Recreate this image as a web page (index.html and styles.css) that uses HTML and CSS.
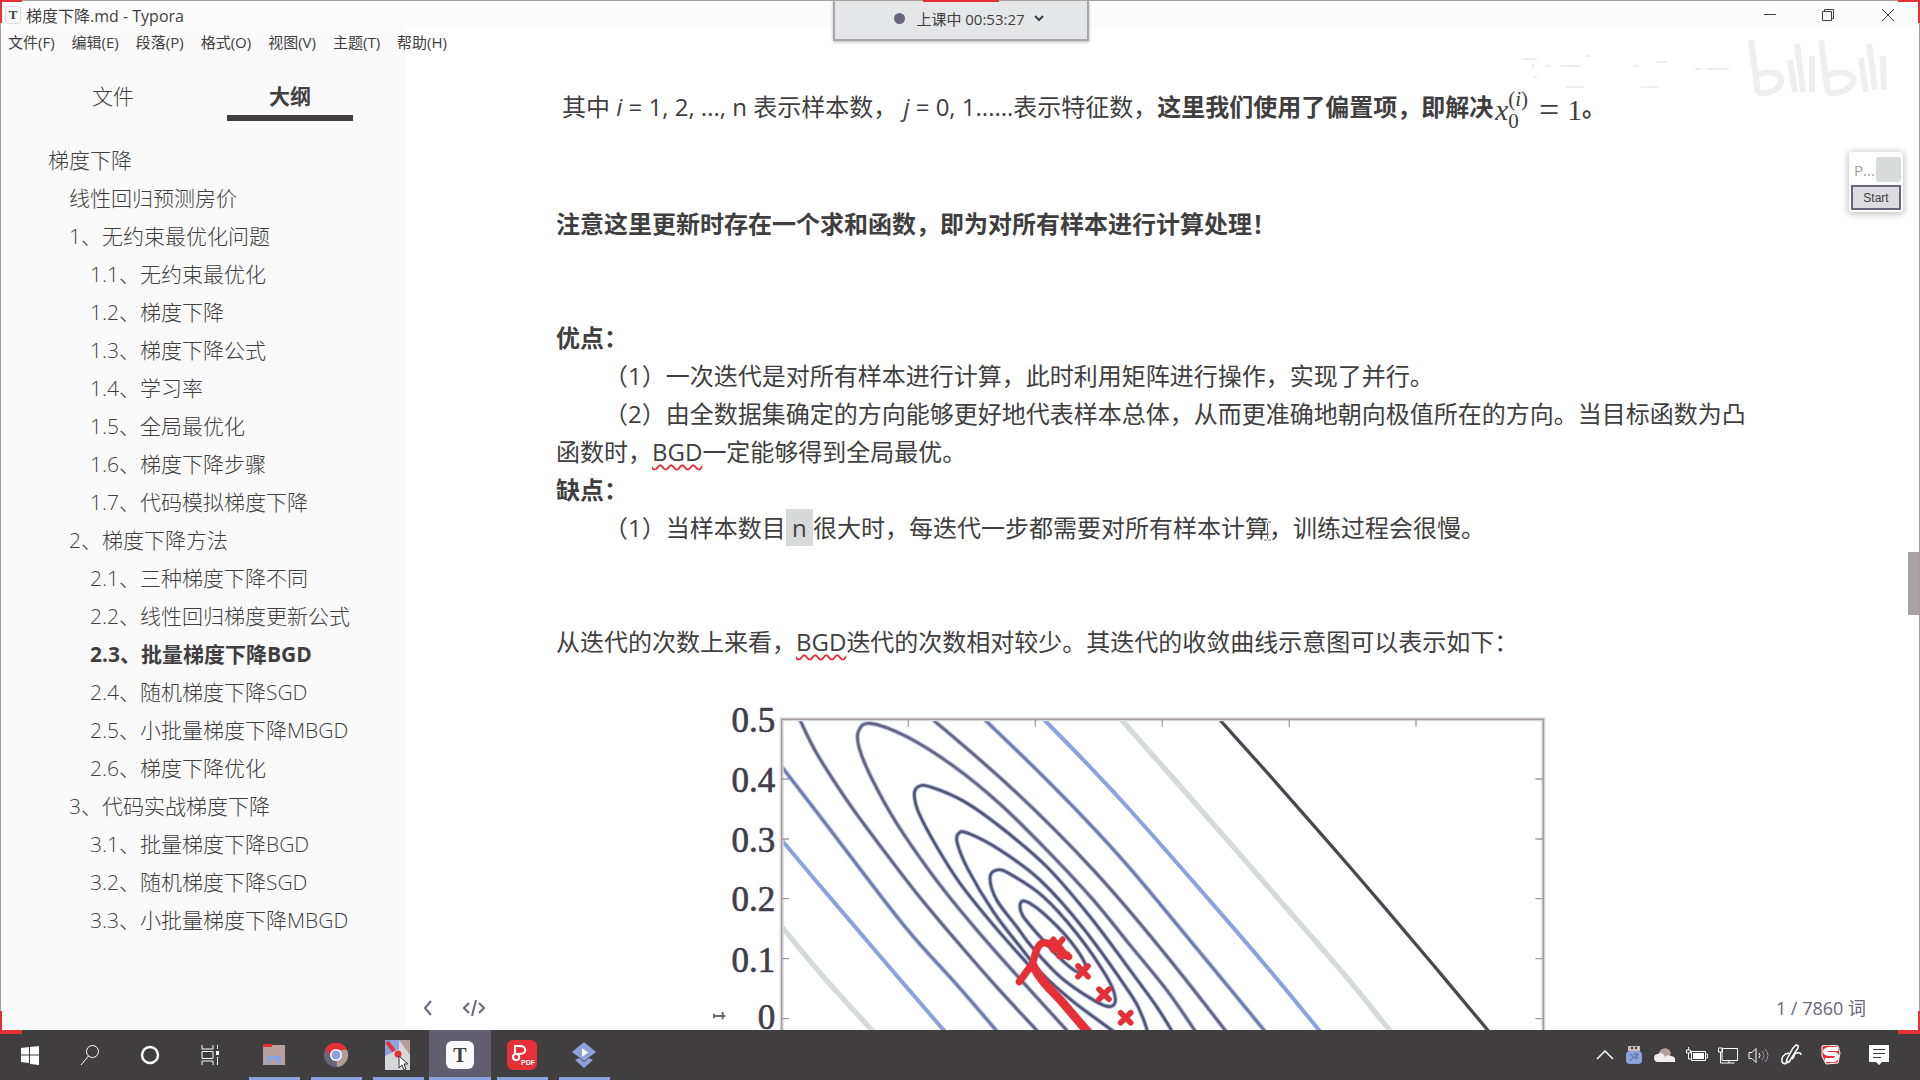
FILE: index.html
```html
<!DOCTYPE html>
<html lang="zh-CN">
<head>
<meta charset="utf-8">
<title>梯度下降.md - Typora</title>
<link rel="stylesheet" href="styles.css">
</head>
<body>
<div class="window">
  <header class="titlebar">
    <span class="app-icon">T</span>
    <span class="title">梯度下降.md - Typora</span>
    <div class="window-buttons">
      <button aria-label="最小化"><svg width="12" height="12" viewBox="0 0 12 12"><path d="M0 5.5h12"/></svg></button>
      <button aria-label="还原"><svg width="12" height="12" viewBox="0 0 12 12"><path d="M.5 2.500h9v9h-9zM2.500 2.500v-2h9v9h-2"/></svg></button>
      <button aria-label="关闭"><svg width="12" height="12" viewBox="0 0 12 12"><path d="M0 0l12 12M12 0L0 12"/></svg></button>
    </div>
  </header>
  <nav class="menubar">
    <button>文件(F)</button><button>编辑(E)</button><button>段落(P)</button><button>格式(O)</button><button>视图(V)</button><button>主题(T)</button><button>帮助(H)</button>
  </nav>
  <div class="workspace">
    <aside class="sidebar">
      <div class="tabs"><button>文件</button><button class="active">大纲</button></div>
      <nav class="outline">
        <a href="#" class="l1">梯度下降</a>
        <a href="#" class="l2">线性回归预测房价</a>
        <a href="#" class="l2">1、无约束最优化问题</a>
        <a href="#" class="l3">1.1、无约束最优化</a>
        <a href="#" class="l3">1.2、梯度下降</a>
        <a href="#" class="l3">1.3、梯度下降公式</a>
        <a href="#" class="l3">1.4、学习率</a>
        <a href="#" class="l3">1.5、全局最优化</a>
        <a href="#" class="l3">1.6、梯度下降步骤</a>
        <a href="#" class="l3">1.7、代码模拟梯度下降</a>
        <a href="#" class="l2">2、梯度下降方法</a>
        <a href="#" class="l3">2.1、三种梯度下降不同</a>
        <a href="#" class="l3">2.2、线性回归梯度更新公式</a>
        <a href="#" class="l3 current">2.3、批量梯度下降BGD</a>
        <a href="#" class="l3">2.4、随机梯度下降SGD</a>
        <a href="#" class="l3">2.5、小批量梯度下降MBGD</a>
        <a href="#" class="l3">2.6、梯度下降优化</a>
        <a href="#" class="l2">3、代码实战梯度下降</a>
        <a href="#" class="l3">3.1、批量梯度下降BGD</a>
        <a href="#" class="l3">3.2、随机梯度下降SGD</a>
        <a href="#" class="l3">3.3、小批量梯度下降MBGD</a>
      </nav>
    </aside>
    <main class="editor">
      <article class="document">
        <p class="formula-line">其中 <i>i</i> = 1, 2, ..., n 表示样本数， <i>j</i> = 0, 1......表示特征数，<b>这里我们使用了偏置项，即解决</b><span class="math"><i>x</i><span class="scripts"><span>(<i>i</i>)</span><span>0</span></span><span class="eq">=</span>1</span><b>。</b></p>
        <p><b>注意这里更新时存在一个求和函数，即为对所有样本进行计算处理！</b></p>
        <div class="block">
          <p><b>优点：</b></p>
          <p class="item">（1）一次迭代是对所有样本进行计算，此时利用矩阵进行操作，实现了并行。</p>
          <p class="item">（2）由全数据集确定的方向能够更好地代表样本总体，从而更准确地朝向极值所在的方向。当目标函数为凸函数时，<span class="misspelled">BGD</span>一定能够得到全局最优。</p>
          <p><b>缺点：</b></p>
          <p class="item">（1）当样本数目<mark> n </mark>很大时，每迭代一步都需要对所有样本计算<span class="caret-host"><svg class="ibeam" width="9" height="20" viewBox="0 0 9 20"><path d="M1 1h3M5 1h3M4.500 2v16M1 19h3M5 19h3M3 13h3"/></svg></span>，训练过程会很慢。</p>
        </div>
        <p>从迭代的次数上来看，<span class="misspelled">BGD</span>迭代的次数相对较少。其迭代的收敛曲线示意图可以表示如下：</p>
        <svg class="chart" width="880" height="400" viewBox="0 0 2640 1200">
          <g class="labels" text-anchor="end">
            <text x="226" y="127">0.5</text><text x="226" y="306">0.4</text><text x="226" y="485">0.3</text><text x="226" y="663">0.2</text><text x="226" y="845">0.1</text><text x="226" y="1018">0</text>
          </g>
          <path class="mark" d="M40 978h36M42 971v14M68 966v22"/>
          <g id="contours"></g>
          <path class="frame-halo" d="M245 1200V88H2530V1200"/>
          <path class="frame" d="M245 1200V88H2530V1200M625 90v20M1006 90v20M1387 90v20M1768 90v20M2148 90v20M245 267h22M245 447h22M245 626h22M245 806h22M245 986h22M2530 267h-24M2530 447h-24M2530 626h-24M2530 806h-24M2530 986h-24"/>
          <g class="red">
            <path stroke-width="22" d="M958 875L998 820C1008 780 1015 757 1035 758C1060 764 1080 782 1106 800M1075 778l-20-20M1100 795l-20 2"/>
            <path stroke-width="26" d="M1000 828C1025 880 1060 905 1090 940L1175 1040"/>
            <path stroke-width="17" d="M1060 748l28 34M1088 748l-28 34M1134 828l30 32M1164 828l-30 32M1197 898l30 30M1227 898l-30 30M1262 968l30 30M1292 968l-30 30"/>
          </g>
        </svg>
      </article>
      <div class="status-left">
        <button aria-label="收起侧栏"><svg width="10" height="16" viewBox="0 0 10 16"><path d="M8 1L2 8l6 7"/></svg></button>
        <button aria-label="源代码"><svg width="22" height="16" viewBox="0 0 22 16"><path class="thin" d="M6 3L1 8l5 5M16 3l5 5-5 5M13 0L9 16"/></svg></button>
      </div>
      <div class="word-count">1 / 7860 词</div>
      <div class="scroll-thumb"></div>
    </main>
  </div>
  <button class="class-timer"><span class="dot"></span>上课中 00:53:27<svg width="10" height="7" viewBox="0 0 10 7"><path d="M1 1l4 4 4-4"/></svg></button>
  <svg class="watermark" width="380" height="80" viewBox="0 0 380 80">
    <path class="fine" d="M1 27h15M12 45h4M24 34h6M40 34h20M65 24h5M113 34h5M136 30h10M174 37h6M186 37h22M12 32v5M63 55h-18M120 55h18"/>
    <path d="M230 8L237 61M237 43C250 37 263 43 260 50C258 59 247 62 237 61M269 28L274 60M276 12L282 60M291 24L291 60M300 8L307 61M307 43C322 37 335 43 332 50C328 59 317 62 307 61M340 26L345 60M348 12L354 58M362 24L363 58"/>
  </svg>
  <section class="panel"><div class="panel-head">P...<span></span></div><button>Start</button></section>
  <i class="corner tl"></i><i class="corner tr"></i><i class="corner bl"></i><i class="corner br"></i><i class="corner top"></i>
</div>
<footer class="taskbar">
  <button class="sys" aria-label="开始"><svg width="18" height="20" viewBox="0 0 18 20"><path fill="#fff" d="M0 3l8-1v7.500H0zM9 2l9-1v8.500H9zM0 10.500h8V18l-8-1zM9 10.500h9V20l-9-1z"/></svg></button>
  <button class="sys" aria-label="搜索"><svg width="20" height="22" viewBox="0 0 20 22"><circle cx="12.500" cy="7.500" r="6"/><path d="M8.500 12L1 21"/></svg></button>
  <button class="sys" aria-label="Cortana"><svg width="20" height="20" viewBox="0 0 20 20"><circle cx="10" cy="10" r="8" stroke-width="2.500"/></svg></button>
  <button class="sys" aria-label="任务视图"><svg width="20" height="20" viewBox="0 0 20 20"><path d="M2 0v4h11V0M2 20v-4h11v4M2 6.500h11v7H2zM17.500 0v4M17.500 12v8"/><path stroke-width="3" d="M17.500 6v4"/></svg></button>
  <button class="app first" aria-label="文件资源管理器"><svg width="24" height="24" viewBox="0 0 24 24"><path fill="#b6a19e" d="M1 2h22v20H1z"/><path fill="#e53037" d="M1 1h9v3H1z"/><path fill="#8ba2df" d="M5 13h14v9h-3v-5H8v5H5z"/></svg></button>
  <button class="app" aria-label="Chrome"><svg width="26" height="28" viewBox="0 0 26 28"><circle cx="13" cy="14" r="12" fill="#69667c"/><path fill="#b29d9b" d="M14 26A12 12 0 0 0 24 9H13z"/><path fill="#e53037" d="M2.500 8a12 12 0 0 1 21.500 1H13l-6 6z"/><circle cx="13" cy="14" r="6" fill="#fff"/><circle cx="13" cy="14" r="4.500" fill="#8ba2df"/></svg></button>
  <button class="app" aria-label="地图"><svg width="26" height="30" viewBox="0 0 26 30"><path fill="#d5d7d9" d="M0 0h25v30H0z"/><path fill="#8ba2df" d="M0 0h14v9L0 16z"/><path fill="#b29d9b" d="M14 0h11v15z"/><path stroke="#e53037" stroke-width="4" d="M2 2l7 9"/><circle cx="13" cy="14" r="3.500" fill="#e53037"/><path stroke="#333" fill="#fff" d="M14 16v12l3-3 2 5 2-1-2-5h4z"/></svg></button>
  <button class="app selected" aria-label="Typora"><span class="typora">T</span></button>
  <button class="app" aria-label="PDF"><span class="pdf"><svg width="16" height="20" viewBox="0 0 16 20"><path stroke-width="2" d="M4 10V3h5c7 0 7 8 0 8H5c-4 0-4 6 0 6 4 0 4-3 2-6"/></svg><small>PDF</small></span></button>
  <button class="app" aria-label="课堂"><svg width="26" height="28" viewBox="0 0 26 28"><path fill="#8ba2df" d="M13 1l12 10-12 9L1 11zM4 19l4-2 5 4 5-4 4 2-9 8z"/><path fill="#fff" d="M11 7l6 4.500-6 4.500z"/></svg></button>
  <div class="tray">
    <svg width="18" height="20" viewBox="0 0 18 20"><path d="M1 14l8-8 8 8" stroke-width="1.500"/></svg>
    <svg width="20" height="20" viewBox="0 0 20 20"><path fill="#c9b8b6" d="M4 1h12v5H4z"/><path fill="#444" d="M7 2h2v2H7zM11 2h2v2h-2z"/><rect x="2" y="6" width="16" height="13" rx="4" fill="#8ba2df"/><path stroke="#555d80" d="M6 9l4 3-4 4M10 9h4l-3 4h3"/></svg>
    <svg width="22" height="20" viewBox="0 0 22 20"><path fill="#b6a19e" d="M5 11a6 6 0 0 1 12-3l-4 8z"/><path fill="#eee" d="M4 17a4 4 0 0 1 0-8q4-3 7 3 3-3 6-1 5 0 4 6z"/></svg>
    <svg width="22" height="20" viewBox="0 0 22 20"><path d="M5.500 6.500h14v9h-14zM20 9h1.500v4H20M2.500 2v3M.5 5h4v3h-4zM2.500 8v6h3"/><path fill="#fff" d="M7 8h11v6H7z"/></svg>
    <svg width="20" height="20" viewBox="0 0 20 20"><path d="M4 3.500h15.500v12H4zM.5 3h4v4h-4zM2.500 7v11h14M11 16v2"/></svg>
    <svg width="22" height="20" viewBox="0 0 22 20"><path d="M1 7.500h3l4-4v14l-4-4H1zM11 8q2 2.500 0 5"/><path stroke="#9d9bac" d="M14 6q4 4.500 0 9M17 4q6 6.500 0 13"/></svg>
    <svg width="22" height="22" viewBox="0 0 22 22"><path stroke-width="1.500" d="M13 4l3-3q3 0 2 3L9 18l-3 1 1-4zM9 9C3 10 1 14 2 18q3 4 6-1M12 15c4-2 0-6 5-6q4-1 4 2"/></svg>
    <svg class="sogou" width="22" height="20" viewBox="0 0 22 20"><path fill="#e53037" d="M2 1l5-1 11 1 2 7-2 10-12 1-4-8z"/><path stroke-width="4" d="M18 4H8C3 6 5 8 8 9h7c4 2 1 6-2 6H5"/></svg>
    <svg class="notice" width="20" height="20" viewBox="0 0 20 20"><path fill="#fff" d="M0 0h20v17h-7l-3 3-3-3H0z"/><path stroke="#403e3f" d="M4 4.500h12M4 8.500h12M4 12.500h8"/></svg>
  </div>
</footer>
<script src="contours.js"></script>
</body>
</html>
```

FILE: styles.css
```css
* { box-sizing: border-box; }
body {
  margin: 0;
  height: 100vh;
  display: flex;
  flex-direction: column;
  overflow: hidden;
  background: #fff;
  color: #403e3f;
  font-family: "Open Sans", "Noto Sans CJK SC", sans-serif;
}
button { border: 0; padding: 0; background: none; color: inherit; font: inherit; }
svg { fill: none; stroke: none; display: block; }
p { margin: 0; }

.window {
  position: relative;
  flex: 1;
  min-height: 0;
  display: flex;
  flex-direction: column;
  border: 1px solid #a59c9b;
  border-bottom: 0;
}
.titlebar { display: flex; align-items: center; height: 28px; padding-left: 4px; background: #fcfcfc; font-size: 15px; }
.title { font-size: 16px; }
.app-icon {
  width: 16px; height: 18px; margin-right: 5px;
  border: 1px solid #ddd; border-radius: 3px;
  font: bold 13px/16px "Liberation Serif", serif; text-align: center;
}
.window-buttons { margin-left: auto; display: flex; }
.window-buttons button { width: 58px; height: 28px; display: flex; justify-content: center; align-items: center; }
.window-buttons button:last-child { width: 62px; }
.window-buttons svg { stroke: #403e3f; }
.menubar { display: flex; gap: 17px; height: 27px; padding-left: 7px; background: linear-gradient(90deg, #fafafa 404px, #fff 404px); font-size: 15px; line-height: 27px; }

.workspace { flex: 1; min-height: 0; display: flex; }
.sidebar { width: 404px; flex: none; background: #fafafa; overflow: hidden; font-size: 21px; }
.tabs { display: flex; gap: 51px; padding: 0 0 0 49px; height: 65px; }
.tabs button { width: 126px; border-bottom: 6px solid transparent; font-weight: 300; line-height: 56px; padding-top: 12px; }
.tabs .active { font-weight: 700; border-color: #403e3f; }
.outline { display: flex; flex-direction: column; padding-top: 20px; font-weight: 300; }
.outline a { color: inherit; text-decoration: none; line-height: 38px; height: 38px; white-space: nowrap; }
.l1 { padding-left: 47px; }
.l2 { padding-left: 68px; }
.l3 { padding-left: 89px; }
.outline .current { font-weight: 700; }

.editor { position: relative; flex: 1; min-width: 0; overflow: hidden; }
.document { display: flex; flex-direction: column; gap: 76px; padding: 32px 160px 0 151px; font-size: 24px; line-height: 38px; }
.formula-line { padding-left: 6px; white-space: nowrap; }
.item { text-indent: 48px; }
.misspelled { text-decoration: underline wavy #e53037 2px; text-underline-offset: 3px; }
mark { background: #d7d9db; color: inherit; padding: 2px 0; white-space: pre; }
.caret-host { position: relative; text-indent: 0; }
.ibeam { position: absolute; right: -3px; top: 10px; stroke: #69667c; }
.math { display: inline-flex; align-items: center; height: 38px; margin-left: 2px; vertical-align: middle; font-family: "Liberation Serif", serif; font-size: 29px; }
.scripts { display: flex; flex-direction: column; font-size: 21px; line-height: 22px; }
.eq { margin: 0 8px 0 11px; font-size: 36px; }

.chart { align-self: flex-start; flex: none; margin: -47px 0 0 144px; }
.labels text { font-family: "Liberation Serif", serif; font-size: 105px; fill: #403e4a; stroke: #403e4a; stroke-width: 2; }
.mark { stroke: #69667c; stroke-width: 6; }
.frame-halo { stroke: #d7d9db; stroke-width: 12; }
.frame { stroke: #a99b9c; stroke-width: 4; }
.red { stroke: #e53037; stroke-linecap: round; }
.contour { stroke: #69667c; stroke-width: 8; }
.contour.inner { stroke: #565873; }
.halo { stroke: #b3c1e8; stroke-width: 14; }
.contour.mid { stroke: #6f7cab; }
.contour.light { stroke: #8ba2df; stroke-width: 12; }
.contour.pale { stroke: #d7d9db; stroke-width: 16; }
.contour.dark { stroke: #4c4650; stroke-width: 10; }

.status-left { position: absolute; left: 18px; bottom: 14px; display: flex; gap: 30px; }
.status-left svg { stroke: #69667c; stroke-width: 2; }
.status-left .thin { stroke-width: 2; }
.word-count { position: absolute; right: 53px; bottom: 8px; font-size: 18px; line-height: 28px; color: #69667c; }
.scroll-thumb { position: absolute; right: 0; top: 496px; width: 11px; height: 63px; background: #aaa1a4; }

.class-timer {
  position: absolute; left: 832px; top: 0; width: 256px; height: 40px;
  display: flex; align-items: center; justify-content: center; padding-bottom: 4px;
  background: #e5e6e8; border: 2px solid #aaa6a8; border-top: 0; box-shadow: 0 1px 3px #bbb;
  font-size: 15px;
}
.dot { width: 11px; height: 11px; margin: 0 11px 0 16px; border-radius: 50%; background: #69667c; }
.class-timer svg { margin-left: 9px; stroke: #403e3f; stroke-width: 2; }
.watermark { position: absolute; right: 18px; top: 31px; stroke: #eeeeef; stroke-width: 6; }
.watermark .fine { stroke: #dedede; stroke-width: 1; }
.panel { position: absolute; right: 16px; top: 151px; width: 54px; padding: 2px; background: #fff; border-radius: 3px; box-shadow: 0 1px 6px 2px #ccc; }
.panel-head { display: flex; justify-content: space-between; align-items: center; height: 31px; padding-left: 3px; font-size: 15px; color: #a99b9c; }
.panel-head span { width: 25px; height: 25px; border-radius: 3px; background: #d9dadc; }
.panel button { display: block; width: 100%; height: 25px; border: 2px solid #69667c; background: #dcdde0; font: 12px "Liberation Sans", sans-serif; }
.corner { position: absolute; width: 22px; height: 23px; border: 0 solid #e53037; }
.tl { left: -1px; top: -1px; border-width: 2px 0 0 2px; }
.tr { right: -1px; top: -1px; border-width: 2px 2px 0 0; }
.bl { left: -1px; bottom: -4px; border-width: 0 0 4px 2px; }
.br { right: -1px; bottom: -4px; border-width: 0 2px 4px 0; }
.top { left: 922px; top: -1px; width: 76px; border-width: 2px 0 0; }

.taskbar { height: 50px; flex: none; display: flex; background: #403e3f; }
.taskbar button { display: flex; align-items: center; justify-content: center; }
.taskbar svg { stroke-width: 1; }
.sys { width: 60px; }
.sys svg, .tray svg { stroke: #fff; }
.sys path[fill] { stroke: none; }
.tray path[fill="#fff"], .tray path[fill="#eee"], .tray path[fill^="#b"], .tray path[fill^="#c"], .tray path[fill="#444"], .tray rect { stroke: none; }
.app { position: relative; width: 62px; }
.first { margin-left: 3px; }
.app::after { content: ""; position: absolute; left: 6px; right: 5px; bottom: 0; height: 3px; background: #8ba2df; }
.selected { background: #615e70; }
.selected::after { left: 0; right: 0; }
.typora { width: 28px; height: 28px; border-radius: 6px; background: #fafafa; font: bold 20px/28px "Liberation Serif", serif; text-align: center; }
.pdf { position: relative; width: 30px; height: 30px; border-radius: 6px; background: #e53037; padding: 3px 4px; }
.pdf svg { stroke: #fff; }
.pdf small { position: absolute; right: 2px; bottom: 3px; color: #fff; font: bold 7px/8px "Liberation Sans", sans-serif; }
.tray { margin-left: auto; display: flex; align-items: center; gap: 10px; padding-right: 31px; }
.sogou { margin-left: 8px; }
.notice { margin-left: 17px; }
```

FILE: contours.js
```js
// Contour lines of the cost surface, as points joined by a smooth curve.
const contours = [
  ["pale", false, [[245, 710], [370, 860], [520, 1025]]],
  ["light", false, [[245, 450], [350, 575], [550, 810], [735, 1025]]],
  ["mid", false, [[245, 230], [380, 405], [540, 615], [640, 740], [780, 895], [892, 1025]]],
  ["", false, [[300, 90], [350, 190], [440, 330], [520, 440], [650, 610], [780, 765], [900, 902], [1014, 1025]]],
  ["", false, [[1104, 1025], [900, 800], [780, 660], [690, 545], [590, 400], [515, 265], [478, 175], [475, 125], [510, 100], [620, 140], [760, 228], [900, 342], [1050, 490], [1180, 630], [1290, 765], [1400, 900], [1487, 1025]]],
  ["inner", false, [[1174, 1025], [1000, 840], [880, 705], [780, 580], [710, 470], [657, 370], [643, 315], [655, 290], [690, 290], [790, 333], [900, 410], [1040, 530], [1170, 680], [1290, 840], [1370, 950], [1417, 1025]]],
  ["inner", false, [[1242, 1025], [1120, 935], [1030, 855], [960, 770], [880, 665], [805, 540], [772, 460], [776, 430], [805, 430], [900, 480], [1020, 570], [1150, 715], [1290, 910], [1325, 975], [1343, 1025]]],
  ["inner", true, [[890, 540], [870, 565], [890, 630], [950, 710], [995, 770], [1080, 860], [1180, 930], [1230, 950], [1246, 925], [1220, 860], [1130, 730], [1030, 620], [930, 552]]],
  ["inner", true, [[968, 633], [960, 650], [970, 680], [1020, 740], [1080, 805], [1130, 845], [1155, 840], [1150, 810], [1100, 740], [1030, 670], [990, 640]]],
  ["", false, [[700, 90], [800, 175], [930, 290], [1060, 415], [1180, 540], [1290, 665], [1430, 835], [1579, 1025]]],
  ["mid", false, [[855, 90], [1000, 230], [1150, 382], [1290, 535], [1490, 775], [1696, 1025]]],
  ["light", false, [[1033, 90], [1160, 220], [1290, 360], [1500, 598], [1700, 830], [1861, 1025]]],
  ["pale", false, [[1265, 90], [1490, 345], [1730, 620], [1930, 850], [2072, 1025]]],
  ["dark", false, [[1560, 90], [1730, 280], [1960, 543], [2200, 825], [2367, 1025]]]
];

// Catmull-Rom spline through the points, written as cubic Bezier segments.
function spline(points, closed) {
  const n = points.length;
  const at = i => closed ? points[(i + n) % n] : points[Math.max(0, Math.min(n - 1, i))];
  let d = "M" + points[0];
  for (let i = 0; i < (closed ? n : n - 1); i++) {
    const [a, b, c, e] = [at(i - 1), at(i), at(i + 1), at(i + 2)];
    d += "C" + [b[0] + (c[0] - a[0]) / 6, b[1] + (c[1] - a[1]) / 6,
      c[0] - (e[0] - b[0]) / 6, c[1] - (e[1] - b[1]) / 6, c[0], c[1]];
  }
  return d;
}

const group = document.getElementById("contours");
for (const [kind, closed, points] of contours) {
  for (const name of ["halo", "contour " + kind]) {
    if (name === "halo" && ["pale", "light", "dark"].includes(kind)) continue;
    const path = document.createElementNS("http://www.w3.org/2000/svg", "path");
    path.setAttribute("class", name);
    path.setAttribute("d", spline(points, closed));
    group.append(path);
  }
}
```
